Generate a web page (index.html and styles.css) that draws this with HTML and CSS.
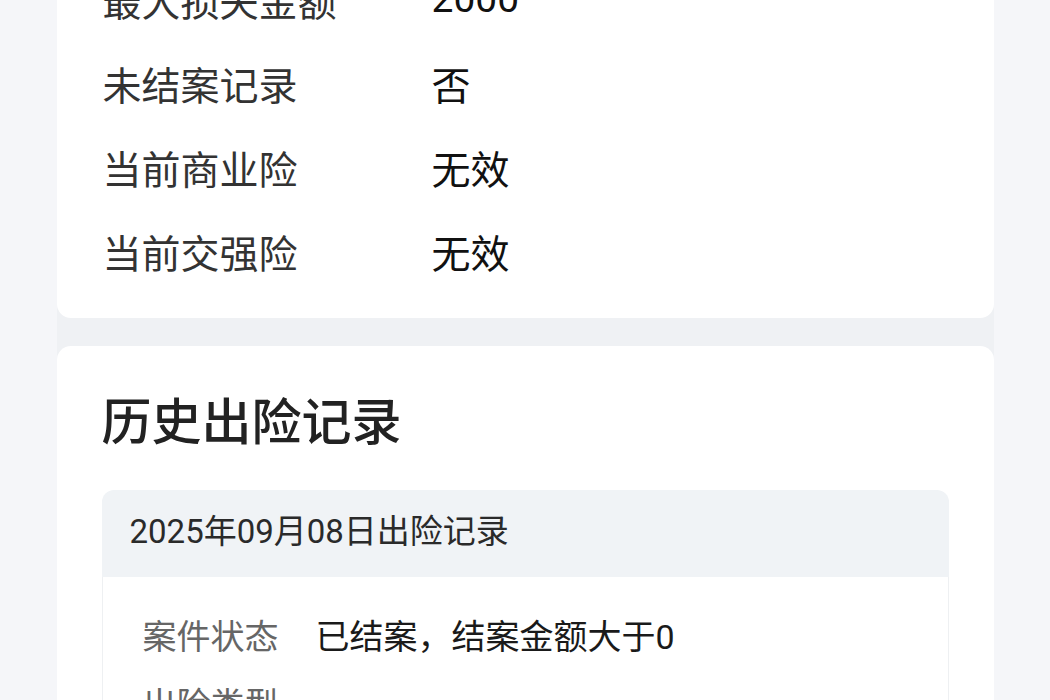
FILE: index.html
```html
<!DOCTYPE html>
<html lang="zh-CN">
<head>
  <meta charset="UTF-8">
  <meta name="viewport" content="width=device-width, initial-scale=1.0">
  <title>出险记录</title>
  <link rel="stylesheet" href="styles.css">
</head>
<body>
  <div class="page">
    <div class="card summary">
      <div class="row"><span class="label">最大损失金额</span><span class="value">2000</span></div>
      <div class="row"><span class="label">未结案记录</span><span class="value">否</span></div>
      <div class="row"><span class="label">当前商业险</span><span class="value">无效</span></div>
      <div class="row"><span class="label">当前交强险</span><span class="value">无效</span></div>
    </div>

    <div class="card history">
      <h2 class="title">历史出险记录</h2>
      <div class="record">
        <div class="record-head">2025年09月08日出险记录</div>
        <div class="record-body">
          <div class="record-row"><span class="record-label">案件状态</span><span class="record-value">已结案，结案金额大于0</span></div>
          <div class="record-row"><span class="record-label">出险类型</span><span class="record-value">-</span></div>
          <div class="record-row"><span class="record-label">出险金额</span><span class="record-value">2000</span></div>
        </div>
      </div>
    </div>
  </div>
</body>
</html>
```

FILE: styles.css
```css
body {
  margin: 0;
  background: #f5f6f9;
  font-family: Roboto, "Noto Sans CJK SC", sans-serif;
  color: #222;
}
.page {
  width: 937px;
  margin: -63px auto 0;
  background: #eff1f4;
}
.card {
  background: #fff;
  border-radius: 14px;
}
.summary {
  padding: 20px 46px 25px;
}
.row {
  display: flex;
  align-items: center;
  height: 84px;
  font-size: 39px;
}
.label {
  width: 329px;
  color: #333;
}
.value {
  color: #111;
}
.history {
  margin-top: 28px;
  padding: 47px 45px 40px;
}
.title {
  margin: 0;
  font-size: 50px;
  font-weight: 500;
  line-height: 60px;
  color: #222;
}
.record {
  margin-top: 37px;
  border-radius: 12px;
  overflow: hidden;
}
.record-head {
  height: 87px;
  line-height: 83px;
  padding-left: 28px;
  background: #f0f3f6;
  font-size: 33px;
  color: #2a2a2a;
}
.record-body {
  border: 1px solid #eef0f2;
  border-top: none;
  padding: 23px 40px;
}
.record-row {
  display: flex;
  align-items: center;
  height: 68px;
  font-size: 34px;
}
.record-label {
  width: 173px;
  color: #666;
}
.record-value {
  color: #1a1a1a;
}
```
